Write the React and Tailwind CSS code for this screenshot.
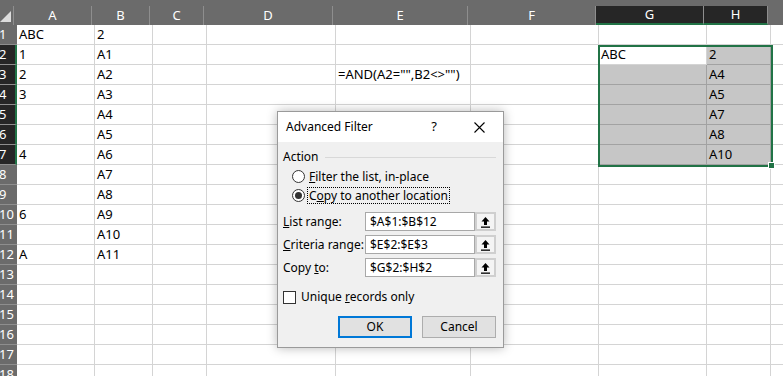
import React from "react";

const cols = [
  { l: "A", w: "w-[78px]" },
  { l: "B", w: "w-[58px]" },
  { l: "C", w: "w-[54px]" },
  { l: "D", w: "w-[129px]" },
  { l: "E", w: "w-[135px]" },
  { l: "F", w: "w-[128px]" },
  { l: "G", w: "w-[108px]" },
  { l: "H", w: "w-[64px]" },
  { l: "", w: "w-[64px]" },
];

const data = {
  1: { A: "ABC", B: "2" },
  2: { A: "1", B: "A1", G: "ABC", H: "2" },
  3: { A: "2", B: "A2", E: '=AND(A2="",B2<>"")', H: "A4" },
  4: { A: "3", B: "A3", H: "A5" },
  5: { B: "A4", H: "A7" },
  6: { B: "A5", H: "A8" },
  7: { A: "4", B: "A6", H: "A10" },
  8: { B: "A7" },
  9: { B: "A8" },
  10: { A: "6", B: "A9" },
  11: { B: "A10" },
  12: { A: "A", B: "A11" },
};

const rows = Array.from({ length: 18 }, (_, i) => i + 1);

function inSel(r, c) {
  return r >= 2 && r <= 7 && (c === "G" || c === "H");
}

function PickIcon() {
  return (
    <svg width="11" height="12" viewBox="0 0 11 12">
      <path d="M5.5 1 L1.5 5.5 H4 V9 H7 V5.5 H9.5 Z" fill="#000" />
      <rect x="1" y="10.5" width="9" height="1.3" fill="#000" />
    </svg>
  );
}

function RangeField({ label, value }) {
  return (
    <div className="flex items-center h-[19px]">
      <div className="w-[82px] text-[12px] text-black">{label}</div>
      <div className="w-[110px] h-[19px] bg-white border border-[#a8a8a8] flex items-center pl-[4px] text-[12px] text-black">
        {value}
      </div>
      <div className="w-[21px] h-[19px] bg-[#cfcfcf] p-[2px]">
        <div className="w-full h-full bg-[#f4f4f4] flex items-center justify-center">
          <PickIcon />
        </div>
      </div>
    </div>
  );
}

export default function App() {
  return (
    <div
      className="relative w-[783px] h-[376px] overflow-hidden bg-white"
      style={{ fontFamily: '"Noto Sans", "Liberation Sans", sans-serif' }}
    >
      {/* top strip */}
      <div className="h-[6px] bg-[#6b6b6b]" />

      {/* column headers */}
      <div className="flex h-[19px] bg-[#6b6b6b] text-white text-[13px]">
        <div className="w-[17px] h-full border-r border-[#8e8e8e] flex items-end justify-end pr-[2px] pb-[3px]">
          <svg width="11" height="11" viewBox="0 0 11 11">
            <polygon points="11,0 11,11 0,11" fill="#dcdcdc" />
          </svg>
        </div>
        {cols.map((c, i) => {
          const sel = c.l === "G" || c.l === "H";
          return (
            <div
              key={i}
              className={`${c.w} shrink-0 h-full flex items-center justify-center border-r ${
                sel
                  ? "bg-[#262626] border-[#8e8e8e] border-b-2 border-b-[#217346]"
                  : "border-[#8e8e8e]"
              }`}
            >
              {c.l}
            </div>
          );
        })}
      </div>

      {/* rows */}
      {rows.map((r) => {
        const selRow = r >= 2 && r <= 7;
        return (
          <div key={r} className="flex h-[20px]">
            <div
              className={`w-[17px] shrink-0 h-full flex items-center text-[13px] text-white border-b border-[#8e8e8e] ${
                selRow ? "bg-[#262626] border-r-2 border-r-[#217346]" : "bg-[#6b6b6b]"
              }`}
            >
              <span className="-ml-[1px]">{r}</span>
            </div>
            {cols.map((c, i) => {
              const v = data[r] && data[r][c.l];
              const s = inSel(r, c.l) && !(r === 2 && c.l === "G");
              return (
                <div
                  key={i}
                  className={`${c.w} shrink-0 h-full flex items-center pl-[2px] pt-[1px] text-[13px] text-black whitespace-nowrap border-r border-b ${
                    s ? "bg-[#c6c6c6] border-[#a2a2a2]" : "border-[#d4d4d4]"
                  }`}
                >
                  {v}
                </div>
              );
            })}
          </div>
        );
      })}

      {/* selection outline */}
      <div className="absolute left-[598px] top-[45px] w-[175px] h-[122px] border-2 border-[#217346] pointer-events-none" />
      <div className="absolute left-[768px] top-[162px] w-[7px] h-[7px] bg-[#217346] border border-white" />

      {/* Advanced Filter dialog */}
      <div className="absolute left-[277px] top-[111px] w-[227px] h-[237px] bg-[#f0f0f0] border border-[#9a9a9a] shadow-[0_0_10px_rgba(0,0,0,0.28)] text-black">
        <div className="h-[30px] bg-white flex items-center pl-[8px] pr-[14px] text-[12px]">
          <span className="flex-1">Advanced Filter</span>
          <span className="w-[20px] mr-[25px] text-center text-[13px]">?</span>
          <span className="w-[20px] flex justify-center">
            <svg width="11" height="11" viewBox="0 0 11 11">
              <path d="M0.5 0.5 L10.5 10.5 M10.5 0.5 L0.5 10.5" stroke="#000" strokeWidth="1.1" />
            </svg>
          </span>
        </div>

        <div className="pl-[5px] pr-[7px] text-[12px]">
          <div className="flex items-center h-[18px] mt-[6px]">
            <span>Action</span>
            <div className="flex-1 h-px bg-[#d8d8d8] ml-[6px]" />
          </div>

          <div className="flex items-center h-[19px] pl-[9px] mt-[1px]">
            <div className="w-[13px] h-[13px] rounded-full border border-[#333] bg-white mr-[4px]" />
            <span>
              <span className="underline">F</span>ilter the list, in-place
            </span>
          </div>
          <div className="flex items-center h-[19px] pl-[9px]">
            <div className="w-[13px] h-[13px] rounded-full border border-[#333] bg-white mr-[2px] flex items-center justify-center">
              <div className="w-[7px] h-[7px] rounded-full bg-[#333]" />
            </div>
            <span className="border border-dotted border-black px-[1px] leading-[15px]">
              C<span className="underline">o</span>py to another location
            </span>
          </div>

          <div className="flex flex-col gap-[4px] mt-[7px]">
            <RangeField
              label={
                <>
                  <span className="underline">L</span>ist range:
                </>
              }
              value="$A$1:$B$12"
            />
            <RangeField
              label={
                <>
                  <span className="underline">C</span>riteria range:
                </>
              }
              value="$E$2:$E$3"
            />
            <RangeField
              label={
                <>
                  Copy <span className="underline">t</span>o:
                </>
              }
              value="$G$2:$H$2"
            />
          </div>

          <div className="flex items-center h-[14px] mt-[13px]">
            <div className="w-[13px] h-[13px] border border-[#333] bg-white mr-[5px]" />
            <span>
              Unique <span className="underline">r</span>ecords only
            </span>
          </div>

          <div className="flex justify-end gap-[10px] mt-[12px]">
            <button className="w-[74px] h-[22px] bg-[#e1e1e1] border-2 border-[#0078d7] text-[12px]">
              OK
            </button>
            <button className="w-[74px] h-[22px] bg-[#e1e1e1] border border-[#adadad] text-[12px]">
              Cancel
            </button>
          </div>
        </div>
      </div>
    </div>
  );
}
